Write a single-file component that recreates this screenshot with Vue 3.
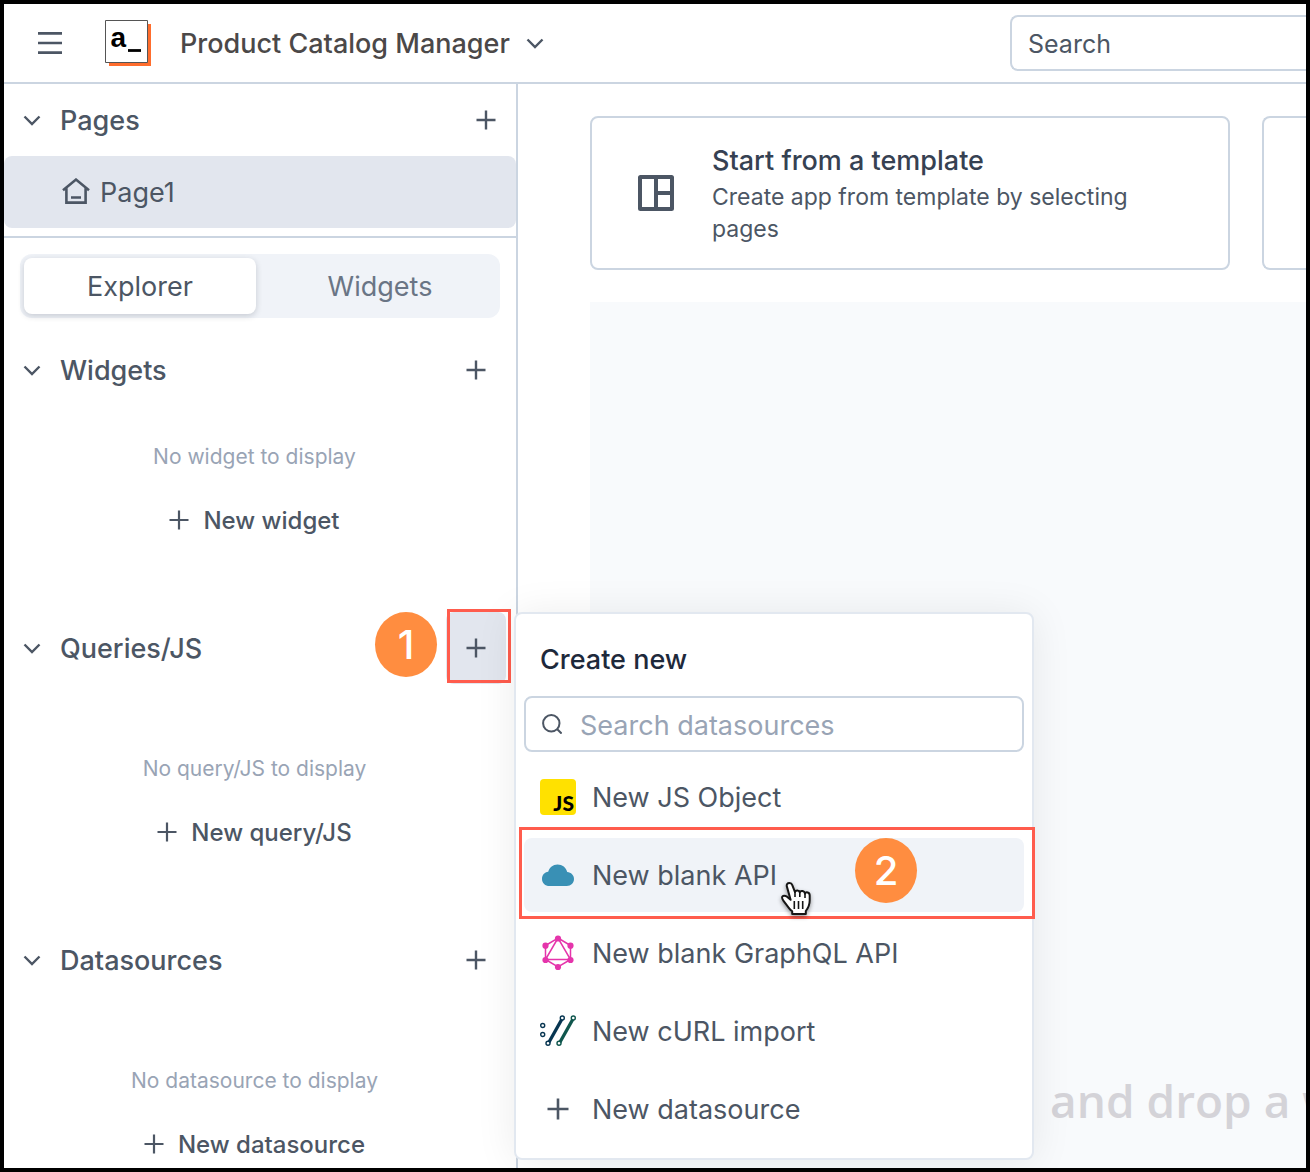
<script setup>
import { ref } from 'vue'

const filter = ref('')
const sections = [
  { id: 'widgets', title: 'Widgets', empty: 'No widget to display', action: 'New widget' },
  { id: 'queries', title: 'Queries/JS', empty: 'No query/JS to display', action: 'New query/JS', active: true },
  { id: 'datasources', title: 'Datasources', empty: 'No datasource to display', action: 'New datasource' },
]
const options = [
  { icon: 'js', label: 'New JS Object' },
  { icon: 'cloud', label: 'New blank API', active: true },
  { icon: 'graphql', label: 'New blank GraphQL API' },
  { icon: 'curl', label: 'New cURL import' },
  { icon: 'plus', label: 'New datasource' },
]
</script>

<template>
  <div class="shell">
    <header class="topbar">
      <button class="icon-btn menu" aria-label="Menu">
        <svg width="24" height="22" viewBox="0 0 24 22"><path d="M0 1.4h24M0 11h24M0 20.600h24" stroke="#4c5664" stroke-width="2.6" /></svg>
      </button>
      <a class="logo" href="#" aria-label="Home">
        <svg width="48" height="48" viewBox="0 0 48 48">
          <path d="M4 5h42v42H4z" fill="#ff6d2d" />
          <path d="M.5 1.500h42v42H.5z" fill="#fff" stroke="#555" />
          <text x="5.500" y="28" class="logo-text">a</text>
          <path d="M23 31.500h13" stroke="#000" stroke-width="2.800" />
        </svg>
      </a>
      <button class="app-name">
        <span class="label">Product Catalog Manager</span>
        <svg width="18" height="12" viewBox="0 0 18 12"><path d="M1.500 2.500 9 10l7.500-7.500" fill="none" stroke="#4c5664" stroke-width="2.400" /></svg>
      </button>
      <input class="global-search" type="search" placeholder="Search" aria-label="Search" />
    </header>

    <div class="body">
      <aside class="sidebar">
        <section class="pages">
          <div class="section-head">
            <svg class="chevron" width="18" height="12" viewBox="0 0 18 12"><path d="M1.500 2.500 9 10l7.500-7.500" fill="none" stroke="#4c5664" stroke-width="2.400" /></svg>
            <h2>Pages</h2>
            <button class="icon-btn add add-page" aria-label="Add page">
              <svg width="20" height="20" viewBox="0 0 20 20"><path d="M10 .5v19M.5 10h19" stroke="#4c5664" stroke-width="2.400" /></svg>
            </button>
          </div>
          <a class="page" href="#">
            <svg width="28" height="28" viewBox="0 0 28 28"><path d="M1 12.200 14 1.600l13 10.600M4.400 10v14.600h19.200V10M9 19.500h10" fill="none" stroke="#4c5664" stroke-width="2.600" /></svg>
            <span class="label">Page1</span>
          </a>
        </section>

        <div class="tabs" role="tablist">
          <button class="tab selected" role="tab" aria-selected="true"><span class="label">Explorer</span></button>
          <button class="tab" role="tab" aria-selected="false"><span class="label">Widgets</span></button>
        </div>

        <section v-for="s in sections" :key="s.id" class="group" :class="s.id">
          <div class="section-head">
            <svg class="chevron" width="18" height="12" viewBox="0 0 18 12"><path d="M1.500 2.500 9 10l7.500-7.500" fill="none" stroke="#4c5664" stroke-width="2.400" /></svg>
            <h2>{{ s.title }}</h2>
            <button class="icon-btn add" :class="{ pressed: s.active }" :aria-label="s.action">
              <svg width="20" height="20" viewBox="0 0 20 20"><path d="M10 .5v19M.5 10h19" stroke="#4c5664" stroke-width="2.400" /></svg>
              <span v-if="s.active" class="frame frame-add"></span>
              <span v-if="s.active" class="step step-one">1</span>
            </button>
          </div>
          <div class="empty">
            <p>{{ s.empty }}</p>
            <button class="create">
              <svg width="20" height="20" viewBox="0 0 20 20"><path d="M10 .5v19M.5 10h19" stroke="#4c5664" stroke-width="2.200" /></svg>
              <span class="label">{{ s.action }}</span>
            </button>
          </div>
        </section>
      </aside>

      <main class="main">
        <div class="cards">
          <a class="card" href="#">
            <svg width="36" height="36" viewBox="0 0 36 36"><rect x="2" y="2" width="32" height="32" rx=".5" fill="none" stroke="#4c5664" stroke-width="4" /><path d="M18 2v32M18 18h16" stroke="#4c5664" stroke-width="4" /></svg>
            <span class="card-copy">
              <strong>Start from a template</strong>
              <span>Create app from template by selecting pages</span>
            </span>
          </a>
          <div class="card next-card"></div>
        </div>
        <div class="canvas"><p>and drop a w</p></div>
      </main>
    </div>

    <div class="popover" role="dialog" aria-labelledby="create-title">
      <h3 id="create-title">Create new</h3>
      <div class="search-box">
        <svg width="20" height="20" viewBox="0 0 20 20"><circle cx="9.300" cy="9.300" r="8.200" fill="none" stroke="#4c5664" stroke-width="2" /><path d="m15 15 4.600 4.600" stroke="#4c5664" stroke-width="2" /></svg>
        <input v-model="filter" type="text" placeholder="Search datasources" aria-label="Search datasources" />
      </div>
      <ul>
        <li v-for="o in options" :key="o.label">
          <button class="option" :class="{ hovered: o.active }">
            <svg v-if="o.icon === 'js'" width="36" height="36" viewBox="0 0 36 36">
              <rect width="36" height="36" rx="4" fill="#ffe100" />
              <text x="34" y="32" text-anchor="end" class="js-text">JS</text>
            </svg>
            <svg v-else-if="o.icon === 'cloud'" width="36" height="36" viewBox="0 0 36 36">
              <path d="M9.500 29C5.200 29 2 25.800 2 21.900c0-3.700 2.500-6.600 6.200-7.100C9.500 10.500 13 7.500 17.500 7.500c4.800 0 8.700 3.100 9.700 7.500 3.900.2 6.800 3.200 6.800 7 0 3.900-3.100 7-7.200 7z" fill="#3990b5" />
            </svg>
            <svg v-else-if="o.icon === 'graphql'" width="36" height="36" viewBox="0 0 36 36">
              <path d="M18 3 30.500 10.500v14L18 32 5.500 24.500v-14zM18 3 5.500 24.500h25z" fill="none" stroke="#e535ab" stroke-width="1.500" />
              <g fill="#e535ab"><circle cx="18" cy="3.500" r="3.100" /><circle cx="30.500" cy="10.700" r="3.100" /><circle cx="30.500" cy="25" r="3.100" /><circle cx="18" cy="32" r="3.100" /><circle cx="5.500" cy="25" r="3.100" /><circle cx="5.500" cy="10.700" r="3.100" /></g>
            </svg>
            <svg v-else-if="o.icon === 'curl'" width="36" height="36" viewBox="0 0 36 36">
              <path d="M22 6 8.500 30" stroke="#073551" stroke-width="3.400" /><path d="M33 6 19.500 30" stroke="#0f564d" stroke-width="3.400" />
              <g fill="#fff" stroke="#073551" stroke-width="1.400"><circle cx="2.700" cy="12.500" r="2" /><circle cx="2.700" cy="21.500" r="2" /><circle cx="22.300" cy="5" r="2" /><circle cx="8" cy="30.300" r="2" /></g>
              <g fill="#fff" stroke="#0f564d" stroke-width="1.400"><circle cx="33.300" cy="5" r="2" /><circle cx="19" cy="30.300" r="2" /></g>
            </svg>
            <svg v-else width="36" height="36" viewBox="0 0 36 36"><path d="M18 7.500v21M7.500 18h21" stroke="#4c5664" stroke-width="2.600" /></svg>
            <span class="label">{{ o.label }}</span>
            <template v-if="o.active">
              <span class="frame frame-option"></span>
              <span class="step step-two">2</span>
              <svg class="pointer" width="34" height="38" viewBox="0 0 34 38">
                <path d="M10.500 3c-2.200 0-3.200 1.600-2.600 3.600l3.700 13.200-3.900-3.200c-1.600-1.300-3.500-1.200-4.300-.1-.8 1.200-.1 2.700 1.100 4.300l5.300 7.100c1.200 1.700 2.400 2.700 3.400 3.400V34h13.600v-3c2.400-3 3.900-6.500 3.900-10.800v-4.800c0-3.300-3.800-4-4.700-1.700-.4-3.100-4.600-3.500-5.200-1.200-.7-2.500-4.200-2.500-4.800-.4L13.200 4.900C12.800 3.700 11.900 3 10.500 3z" fill="#fff" stroke="#161616" stroke-width="2" stroke-linejoin="round" />
                <path d="M16 12v5M20.800 12.500V17M26 13.800V18M15.300 21v8M19.500 21v8M23.700 21v8" stroke="#161616" stroke-width="1.600" />
              </svg>
            </template>
          </button>
        </li>
      </ul>
    </div>
  </div>
</template>

<style>
body { margin: 0; }
</style>

<style scoped>
* { box-sizing: border-box; }
.shell {
  position: relative;
  display: flex;
  flex-direction: column;
  height: 100vh;
  overflow: hidden;
  border: 4px solid #000;
  background: #fff;
  color: #4c5664;
  font: 400 27px/36px Inter, sans-serif;
}
h2, h3, p, ul { margin: 0; padding: 0; list-style: none; }
button, input { font: inherit; color: inherit; border: 0; background: none; padding: 0; margin: 0; }
a { color: inherit; text-decoration: none; }
svg { flex: none; display: block; }
.label { display: block; padding-top: 2px; }

.topbar {
  flex: none;
  display: flex;
  align-items: center;
  height: 80px;
  padding-left: 34px;
  border-bottom: 2px solid #cbd5e1;
}
.icon-btn { display: flex; align-items: center; justify-content: center; }
.logo { margin-left: 43px; }
.logo-text { font: 700 28px "Liberation Sans", sans-serif; fill: #000; }
.app-name { display: flex; align-items: center; gap: 16px; margin-left: 27px; font-weight: 500; color: #4b4848; white-space: nowrap; }
.global-search {
  width: 296px;
  height: 56px;
  margin-left: auto;
  padding: 2px 0 0 16px;
  border: 2px solid #cbd5e1;
  border-right: 0;
  border-radius: 8px 0 0 8px;
  font-size: 25px;
  outline: 0;
}
.global-search::placeholder { color: #4c5664; opacity: 1; }

.body { flex: 1; min-height: 0; display: flex; }
.sidebar { flex: none; width: 514px; border-right: 2px solid #cbd5e1; }
.pages { padding-bottom: 8px; border-bottom: 2px solid #cbd5e1; }
.section-head { display: flex; align-items: center; height: 72px; padding-left: 19px; }
h2 { flex: 1; margin-left: 19px; padding-top: 2px; font-size: 27px; font-weight: 500; }
.add { position: relative; width: 60px; height: 72px; margin-right: 10px; border-radius: 8px; }
.add-page { margin-right: 0; }
.pressed { background: #e2e6ee; }
.page { display: flex; align-items: center; gap: 10px; height: 72px; padding-left: 58px; border-radius: 8px; background: #e2e6ee; }
.tabs { display: flex; gap: 8px; margin: 16px; padding: 4px; border-radius: 12px; background: #f0f3f8; }
.tab { flex: 1; height: 56px; border-radius: 8px; color: #6a7585; }
.tab.selected { background: #fff; color: #4c5664; box-shadow: 0 2px 6px rgba(30, 41, 59, .2); }
.empty { display: flex; flex-direction: column; align-items: center; gap: 26px; padding: 67px 11px 73px 0; }
.widgets .empty { padding-top: 33px; }
.empty p { font-size: 21px; line-height: 36px; color: #99a4b5; }
.create { display: flex; align-items: center; gap: 14px; font-size: 24px; font-weight: 500; }

.main { flex: 1; min-width: 0; display: flex; flex-direction: column; padding: 32px 0 0 72px; }
.cards { display: flex; gap: 32px; }
.card { flex: none; display: flex; align-items: center; gap: 38px; width: 640px; height: 154px; padding: 0 46px; border: 2px solid #cbd5e1; border-radius: 8px; }
.next-card { flex: 1; width: auto; padding: 0; border-right: 0; border-radius: 8px 0 0 8px; }
.card-copy { display: flex; flex-direction: column; font-size: 23px; line-height: 32px; }
.card-copy strong { font-size: 27px; line-height: 40px; font-weight: 500; color: #364152; }
.canvas { flex: 1; display: flex; align-items: flex-end; margin-top: 32px; padding: 0 0 36px 460px; overflow: hidden; background: #f8fafc; }
.canvas p { font: 600 46px/64px "Open Sans", sans-serif; color: #d4d3d8; white-space: nowrap; }

.popover {
  position: absolute;
  top: 608px;
  left: 510px;
  width: 520px;
  padding: 24px 8px 8px;
  border: 2px solid #e2e8f0;
  border-radius: 8px;
  background: #fff;
  box-shadow: 0 2px 40px rgba(0, 0, 0, .08);
}
h3 { padding: 4px 16px; font-size: 27px; line-height: 36px; font-weight: 500; color: #1e293b; }
.search-box { display: flex; align-items: center; gap: 18px; height: 56px; margin: 14px 0 8px; padding: 0 16px; border: 2px solid #cbd5e1; border-radius: 8px; }
.search-box input { flex: 1; min-width: 0; height: 52px; padding-top: 2px; outline: 0; }
.search-box input::placeholder { color: #99a4b5; opacity: 1; }
ul { display: flex; flex-direction: column; gap: 4px; padding-bottom: 4px; }
.option { position: relative; display: flex; align-items: center; gap: 16px; width: 100%; height: 74px; padding: 0 16px; border-radius: 8px; white-space: nowrap; }
.hovered { background: #f0f3f8; }
.js-text { font: 900 21px Lato, sans-serif; fill: #000; }

.frame { position: absolute; border: 3px solid #ff5c4d; }
.frame-add { inset: -3px -5px 1px 1px; }
.frame-option { inset: -11px -11px -7px -5px; }
.step {
  position: absolute;
  width: 62px;
  height: 65px;
  border-radius: 50%;
  background: #ff8d40;
  color: #fff;
  font: 500 40px/65px Inter, sans-serif;
  text-align: center;
}
.step-one { top: 0; right: 69px; }
.step-two { top: 0; right: 107px; }
.pointer { position: absolute; left: 255px; top: 42px; filter: drop-shadow(0 2px 2px rgba(0, 0, 0, .4)); }
</style>
